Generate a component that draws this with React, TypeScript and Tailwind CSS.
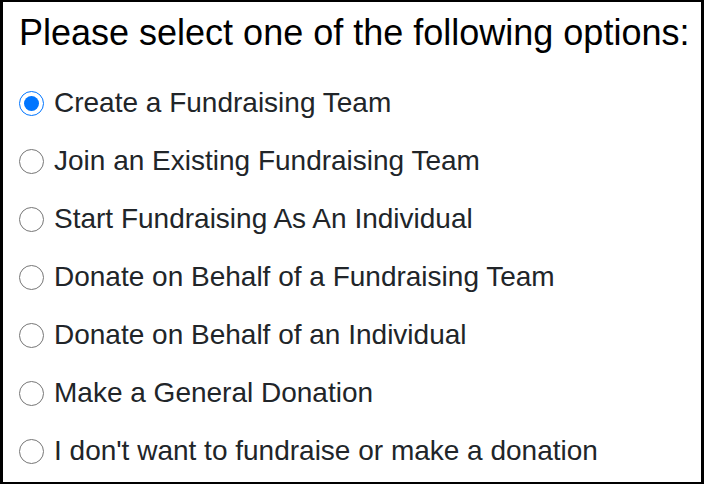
import { useState } from "react";

const options = [
  "Create a Fundraising Team",
  "Join an Existing Fundraising Team",
  "Start Fundraising As An Individual",
  "Donate on Behalf of a Fundraising Team",
  "Donate on Behalf of an Individual",
  "Make a General Donation",
  "I don't want to fundraise or make a donation",
];

export default function App() {
  const [selected, setSelected] = useState(0);

  return (
    <div className="w-[704px] h-[484px] bg-white border-t-2 border-b-2 border-l-[3px] border-r-[3px] border-black pl-4 pt-[10px] font-['Liberation_Sans',Arial,sans-serif]">
      <div className="text-[36px] leading-[41px] text-black">
        Please select one of the following options:
      </div>
      <div className="flex flex-col mt-[21px]">
        {options.map((label, i) => (
          <label key={label} className="flex items-center h-[58px] gap-[10px] cursor-pointer">
            <input
              type="radio"
              name="choice"
              checked={selected === i}
              onChange={() => setSelected(i)}
              className="w-[25px] h-[25px] m-0 shrink-0"
            />
            <span className="text-[28px] leading-[32px] text-[#212529]">{label}</span>
          </label>
        ))}
      </div>
    </div>
  );
}
